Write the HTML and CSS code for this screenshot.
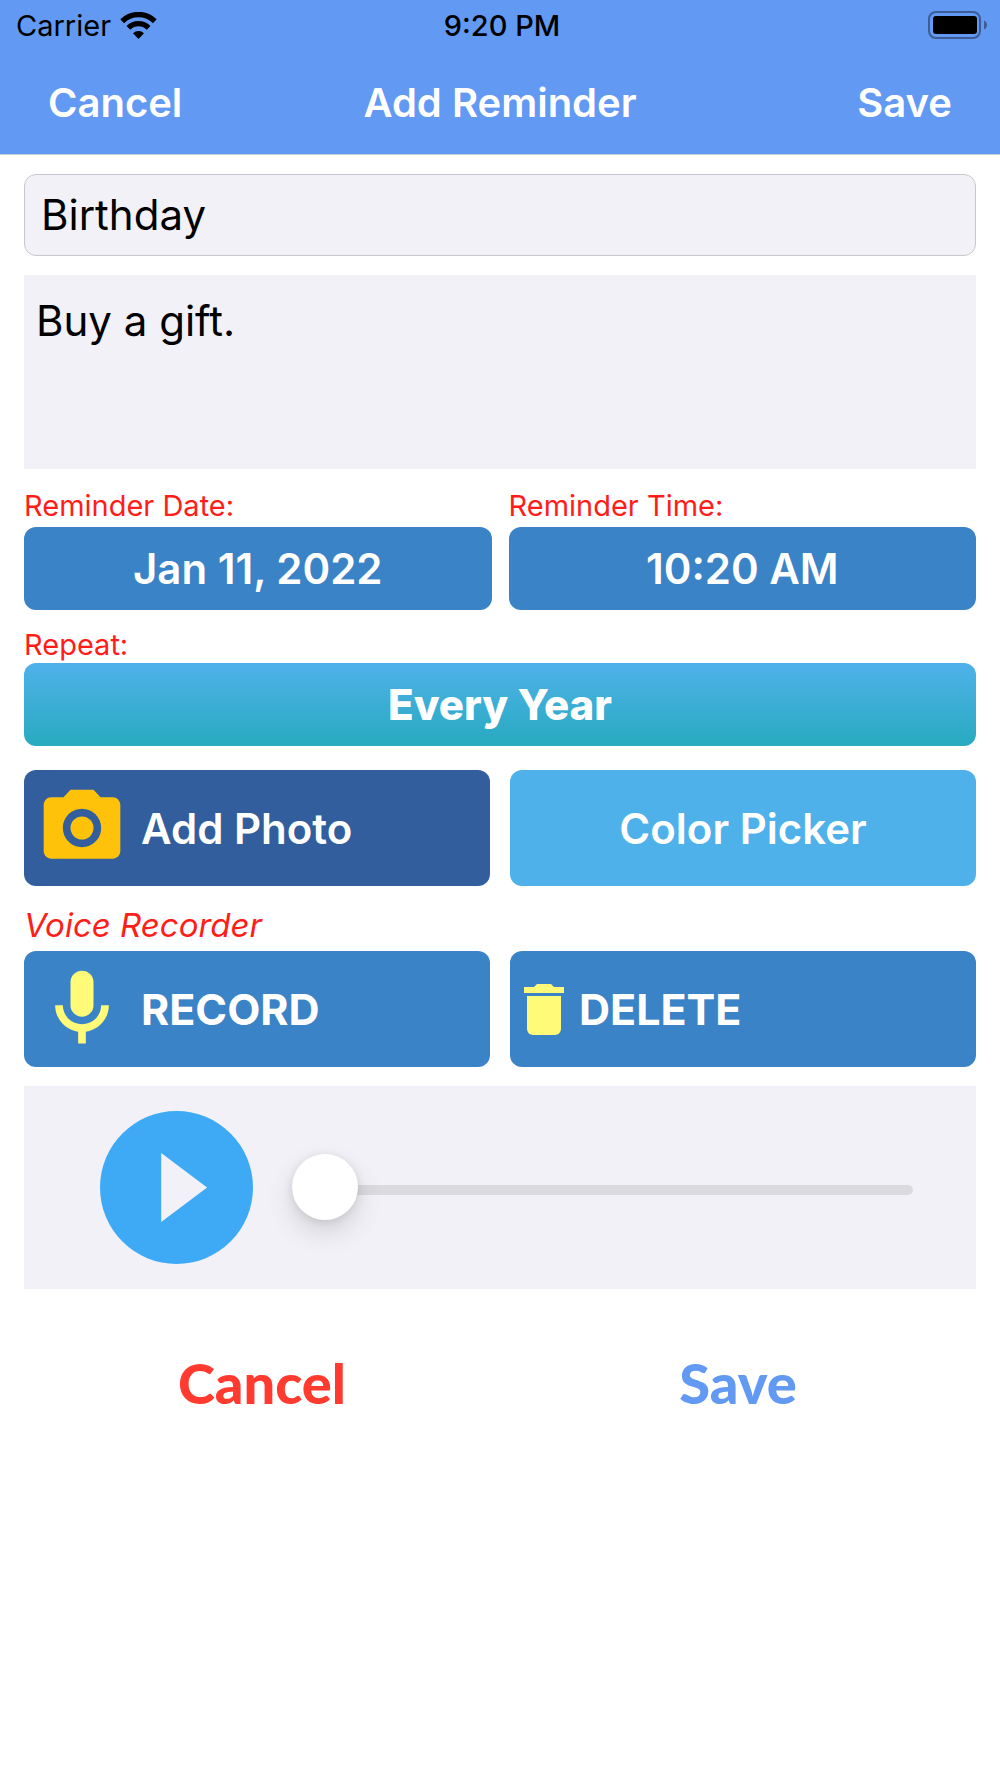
FILE: index.html
```html
<!DOCTYPE html>
<html lang="en">
<head>
<meta charset="utf-8">
<meta name="viewport" content="width=device-width, initial-scale=1">
<title>Add Reminder</title>
<link rel="stylesheet" href="styles.css">
</head>
<body>
<header class="header">
  <div class="status">
    <div class="status-carrier">
      <span>Carrier</span>
      <svg class="wifi" viewBox="0 0 37 27" aria-hidden="true">
        <g fill="none" stroke="#000" stroke-width="5.4">
          <path d="M2.2 9.2a23.3 23.3 0 0 1 32.6 0"/>
          <path d="M8.4 15.8a14.4 14.4 0 0 1 20.2 0"/>
        </g>
        <path d="M13 21.2a7.8 7.8 0 0 1 11 0L18.500 27z"/>
      </svg>
    </div>
    <time class="status-time">9:20 PM</time>
    <svg class="battery" viewBox="0 0 60 28" aria-hidden="true">
      <rect x="1" y="1" width="51" height="26" rx="7" fill="none" stroke="#3c5d96" stroke-width="2"/>
      <rect x="5" y="5" width="44" height="18" rx="3"/>
      <path d="M56 9.500c4 1.500 4 7.500 0 9z" fill="#3c5d96"/>
    </svg>
  </div>
  <nav class="nav">
    <button type="button" class="nav-button">Cancel</button>
    <h1 class="nav-title">Add Reminder</h1>
    <button type="submit" form="reminder" class="nav-button nav-save">Save</button>
  </nav>
</header>

<form class="form" id="reminder">
  <input class="title-field" type="text" value="Birthday" aria-label="Title">
  <textarea class="notes-field" aria-label="Notes">Buy a gift.</textarea>

  <div class="pair when">
    <div class="field">
      <label class="label" for="date">Reminder Date:</label>
      <button type="button" class="button" id="date">Jan 11, 2022</button>
    </div>
    <div class="field">
      <label class="label" for="time">Reminder Time:</label>
      <button type="button" class="button" id="time">10:20 AM</button>
    </div>
  </div>

  <div class="field repeat">
    <label class="label" for="repeat">Repeat:</label>
    <button type="button" class="button button-repeat" id="repeat">Every Year</button>
  </div>

  <div class="pair extras">
    <button type="button" class="button tall with-icon button-photo">
      <svg class="icon" viewBox="0 0 24 24" fill="#ffc20a" aria-hidden="true">
        <circle cx="12" cy="12" r="3"/>
        <path d="M9 2L7.170 4H4c-1.100 0-2 .9-2 2v12c0 1.100.9 2 2 2h16c1.100 0 2-.9 2-2V6c0-1.100-.9-2-2-2h-3.170L15 2H9zm3 15c-2.760 0-5-2.240-5-5s2.240-5 5-5 5 2.240 5 5-2.240 5-5 5z"/>
      </svg>
      Add Photo
    </button>
    <button type="button" class="button tall button-color">Color Picker</button>
  </div>

  <h2 class="section-title">Voice Recorder</h2>
  <div class="pair">
    <button type="button" class="button tall with-icon strong">
      <svg class="icon" viewBox="0 0 24 24" fill="#fffb78" aria-hidden="true">
        <rect x="9" y="2" width="6" height="12" rx="3"/>
        <path d="M5 11h2a5 5 0 0 0 10 0h2c0 3.530-2.610 6.440-6 6.920V21h-2v-3.080c-3.390-.48-6-3.390-6-6.920z"/>
      </svg>
      RECORD
    </button>
    <button type="button" class="button tall with-icon strong">
      <svg class="icon-trash" viewBox="0 0 40 51" fill="#fffb78" aria-hidden="true">
        <path d="M0 3h10l3-3h14l3 3h10v6H0z"/>
        <path d="M3 12h34v33a6 6 0 0 1-6 6H9a6 6 0 0 1-6-6z"/>
      </svg>
      DELETE
    </button>
  </div>

  <div class="player">
    <button type="button" class="play" aria-label="Play">
      <svg viewBox="2 2 20 20" fill="#3eaaf6" aria-hidden="true">
        <path d="M12 2a10 10 0 1 0 0 20 10 10 0 0 0 0-20zm-2 14.500v-9l6 4.500z"/>
      </svg>
    </button>
    <input class="scrubber" type="range" min="0" max="100" value="0" aria-label="Playback position">
  </div>

  <div class="actions">
    <button type="button" class="action action-cancel">Cancel</button>
    <button type="submit" class="action action-save">Save</button>
  </div>
</form>
</body>
</html>
```
FILE: styles.css
```css
*,
*::before,
*::after {
  box-sizing: border-box;
}

body {
  margin: 0;
  background: #fff;
  color: #000;
  font-family: Inter, "Liberation Sans", sans-serif;
}

button {
  margin: 0;
  padding: 0;
  border: 0;
  background: none;
  font: inherit;
  cursor: pointer;
}

/* Header */

.header {
  background: #6299f3;
  border-bottom: 1px solid #c8d0dc;
}

.status,
.nav {
  display: grid;
  grid-template-columns: 1fr auto 1fr;
  align-items: center;
}

.status {
  height: 50px;
  padding: 0 12px 0 16px;
  font-size: 29px;
}

.status-carrier {
  display: flex;
  align-items: center;
  gap: 9px;
}

.wifi {
  width: 37px;
  height: 27px;
}

.status-time {
  font-weight: 500;
}

.battery {
  width: 60px;
  height: 28px;
  justify-self: end;
}

.nav {
  height: 104px;
  padding: 0 48px;
  color: #fff;
  font-size: 40px;
  font-weight: 600;
}

.nav-button {
  justify-self: start;
  color: #fff;
}

.nav-save {
  justify-self: end;
}

.nav-title {
  margin: 0;
  font: inherit;
}

/* Form */

.form {
  display: flex;
  flex-direction: column;
  padding: 19px 24px;
}

.title-field,
.notes-field {
  width: 100%;
  background: #f2f1f7;
  color: #000;
  font: inherit;
  font-size: 42px;
}

.title-field {
  height: 82px;
  padding: 0 16px 2px;
  border: 1px solid #c8c8cc;
  border-radius: 12px;
}

.notes-field {
  display: block;
  height: 194px;
  margin-top: 19px;
  padding: 20px 12px;
  border: 0;
  line-height: 52px;
  resize: none;
}

.pair {
  display: grid;
  grid-template-columns: 1fr 1fr;
  gap: 20px;
}

.when {
  gap: 17px;
  margin-top: 20px;
}

.field {
  display: flex;
  flex-direction: column;
}

.label {
  height: 38px;
  color: #ff1d19;
  font-size: 29px;
  line-height: 34px;
}

.button {
  height: 83px;
  border-radius: 12px;
  background: #3a83c7;
  color: #fff;
  font-size: 42px;
  font-weight: 600;
}

.repeat {
  margin-top: 18px;
}

.repeat .label {
  height: 35px;
}

.button-repeat {
  background: linear-gradient(#4fb1ea, #28aabf);
  font-weight: 800;
}

.extras {
  margin-top: 24px;
}

.tall {
  height: 116px;
}

.with-icon {
  display: flex;
  align-items: center;
  gap: 13px;
  padding: 0 12px;
}

.icon {
  width: 92px;
  height: 92px;
}

.icon-trash {
  width: 40px;
  height: 51px;
  margin: 0 2px;
}

.button-photo {
  background: #325e9d;
}

.button-color {
  background: #4fb1ea;
}

.strong {
  font-size: 43px;
  font-weight: 700;
}

.section-title {
  height: 45px;
  margin: 20px 0 0;
  color: #ff1d19;
  font-size: 33px;
  font-style: italic;
  font-weight: 400;
  line-height: 38px;
}

/* Player */

.player {
  display: flex;
  align-items: center;
  gap: 39px;
  height: 203px;
  margin-top: 19px;
  padding: 0 63px 0 76px;
  background: #f2f1f7;
}

.play {
  flex: none;
  width: 153px;
  height: 153px;
}

.play svg {
  display: block;
  width: 100%;
}

.scrubber {
  flex: 1;
  min-width: 0;
  height: 71px;
  margin: 0;
  padding: 5px 0 0;
  background: none;
  appearance: none;
}

.scrubber::-webkit-slider-runnable-track {
  height: 10px;
  border-radius: 5px;
  background: #dadadf;
}

.scrubber::-webkit-slider-thumb {
  width: 66px;
  height: 66px;
  margin-top: -31px;
  border-radius: 50%;
  background: #fff;
  box-shadow: 0 12px 28px rgba(0, 0, 0, 0.13), 0 2px 10px rgba(0, 0, 0, 0.1);
  appearance: none;
}

/* Bottom actions */

.actions {
  display: grid;
  grid-template-columns: 1fr 1fr;
  margin-top: 59px;
}

.action {
  font-family: Lato, "Open Sans", sans-serif;
  font-size: 56px;
  font-weight: 900;
  line-height: 70px;
}

.action-cancel {
  color: #ff3b30;
}

.action-save {
  color: #6299f3;
}
```
